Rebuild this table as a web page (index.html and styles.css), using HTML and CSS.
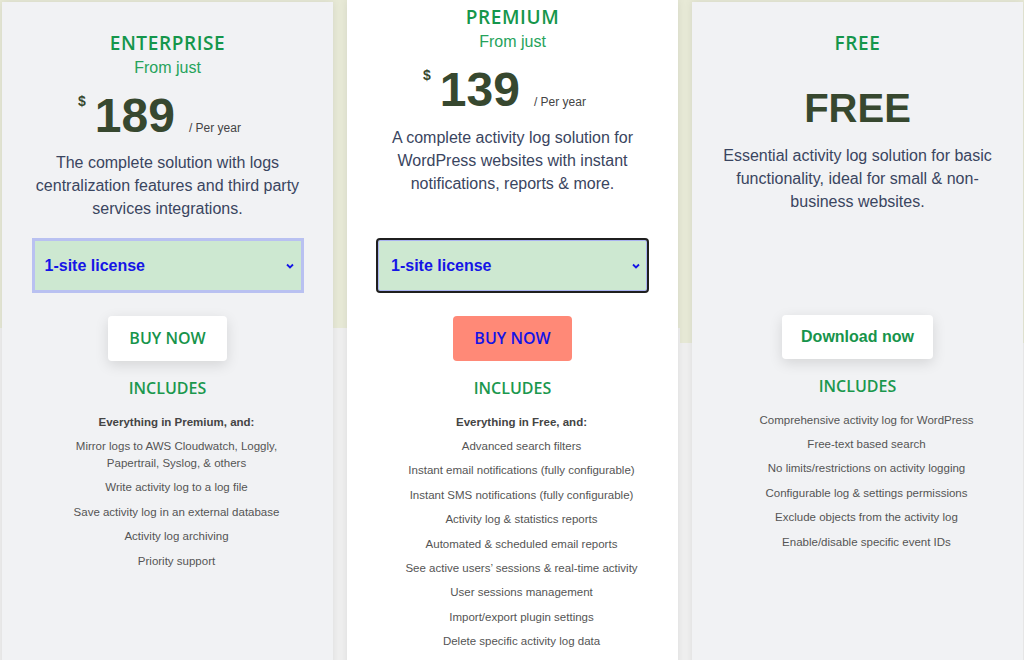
FILE: index.html
```html
<!DOCTYPE html>
<html lang="en">
<head>
<meta charset="utf-8">
<title>Pricing</title>
<link rel="stylesheet" href="styles.css">
</head>
<body>
<main class="plans">
  <section class="card card--enterprise">
    <div class="head">
      <h2 class="title">ENTERPRISE</h2>
      <p class="from">From just</p>
      <div class="price"><span class="cur">$</span><span class="amt">189</span><span class="per">/ Per year</span></div>
      <p class="desc">The complete solution with logs centralization features and third party services integrations.</p>
    </div>
    <div class="license license--soft"><span>1-site license</span><svg class="chev" width="8" height="6" viewBox="0 0 8 6"><polyline points="1,1.5 4,4.5 7,1.5" fill="none" stroke="#1515e6" stroke-width="1.8"/></svg></div>
    <a class="btn" href="#">BUY NOW</a>
    <h3 class="includes">INCLUDES</h3>
    <ul class="features">
      <li class="lead">Everything in Premium, and:</li>
      <li>Mirror logs to AWS Cloudwatch, Loggly, Papertrail, Syslog, &amp; others</li>
      <li>Write activity log to a log file</li>
      <li>Save activity log in an external database</li>
      <li>Activity log archiving</li>
      <li>Priority support</li>
    </ul>
  </section>

  <section class="card card--premium">
    <div class="head">
      <h2 class="title">PREMIUM</h2>
      <p class="from">From just</p>
      <div class="price"><span class="cur">$</span><span class="amt">139</span><span class="per">/ Per year</span></div>
      <p class="desc">A complete activity log solution for WordPress websites with instant notifications, reports &amp; more.</p>
    </div>
    <div class="license license--dark"><span>1-site license</span><svg class="chev" width="8" height="6" viewBox="0 0 8 6"><polyline points="1,1.5 4,4.5 7,1.5" fill="none" stroke="#1515e6" stroke-width="1.8"/></svg></div>
    <a class="btn btn--salmon" href="#">BUY NOW</a>
    <h3 class="includes">INCLUDES</h3>
    <ul class="features">
      <li class="lead">Everything in Free, and:</li>
      <li>Advanced search filters</li>
      <li>Instant email notifications (fully configurable)</li>
      <li>Instant SMS notifications (fully configurable)</li>
      <li>Activity log &amp; statistics reports</li>
      <li>Automated &amp; scheduled email reports</li>
      <li>See active users’ sessions &amp; real-time activity</li>
      <li>User sessions management</li>
      <li>Import/export plugin settings</li>
      <li>Delete specific activity log data</li>
    </ul>
  </section>

  <section class="card card--free">
    <div class="head">
      <h2 class="title">FREE</h2>
      <p class="big">FREE</p>
      <p class="desc">Essential activity log solution for basic functionality, ideal for small &amp; non-business websites.</p>
    </div>
    <div class="spacer"></div>
    <a class="btn btn--dl" href="#">Download now</a>
    <h3 class="includes">INCLUDES</h3>
    <ul class="features">
      <li>Comprehensive activity log for WordPress</li>
      <li>Free-text based search</li>
      <li>No limits/restrictions on activity logging</li>
      <li>Configurable log &amp; settings permissions</li>
      <li>Exclude objects from the activity log</li>
      <li>Enable/disable specific event IDs</li>
    </ul>
  </section>
</main>
</body>
</html>
```

FILE: styles.css
```css
html, body {
  margin: 0;
  padding: 0;
}

body {
  width: 1024px;
  height: 660px;
  overflow: hidden;
  font-family: "Liberation Sans", Arial, sans-serif;
  background-color: #efefef;
  background-image:
    linear-gradient(#e7e9d6, #e7e9d6),
    linear-gradient(#e7e9d6, #e7e9d6);
  background-size: 680px 328px, 344px 343px;
  background-position: 0 0, 680px 0;
  background-repeat: no-repeat;
}

.plans {
  display: grid;
  grid-template-columns: repeat(3, 331px);
  column-gap: 14px;
  padding-left: 2px;
  align-items: start;
}

.card {
  margin-top: 2px;
  height: 720px;
  background: #f1f2f4;
  box-shadow: 0 0 8px rgba(0, 0, 0, 0.08);
  display: flex;
  flex-direction: column;
  align-items: center;
  text-align: center;
}

.card--premium {
  margin-top: 0;
  background: #ffffff;
}

.head {
  box-sizing: border-box;
  width: 100%;
  height: 236px;
  padding-top: 28px;
  display: flex;
  flex-direction: column;
  align-items: center;
}

.card--premium .head {
  height: 238px;
  padding-top: 4px;
}

.title {
  margin: 0;
  font-family: "Open Sans", sans-serif;
  font-weight: 600;
  font-size: 19px;
  line-height: 26px;
  letter-spacing: 0.6px;
  color: #15964b;
}

.from {
  margin: 2px 0 0;
  font-size: 16px;
  line-height: 20px;
  color: #26a35b;
}

.price {
  margin-top: 14px;
  padding-right: 16px;
  height: 48px;
  font-size: 48px;
  line-height: 48px;
  white-space: nowrap;
}

.cur {
  vertical-align: top;
  position: relative;
  top: 2px;
  font-size: 14px;
  line-height: 14px;
  font-weight: 700;
  color: #37482f;
  margin-right: 9px;
}

.amt {
  font-weight: 700;
  color: #37482f;
}

.per {
  margin-left: 14px;
  font-size: 12px;
  line-height: 12px;
  color: #444444;
}

.desc {
  margin: 10.5px 0 0;
  max-width: 285px;
  font-size: 16px;
  line-height: 23.3px;
  color: #3a4560;
}

.card--premium .desc {
  margin-top: 11.5px;
}

.big {
  margin: 28px 0 0;
  font-size: 40px;
  line-height: 48px;
  font-weight: 700;
  color: #37482f;
}

.card--free .desc {
  margin-top: 11.6px;
}

.license {
  box-sizing: border-box;
  width: 273px;
  height: 55px;
  display: flex;
  align-items: center;
  justify-content: space-between;
  padding: 0 7px 0 10px;
  background: #cde8d1;
  color: #1515e6;
  font-weight: 700;
  font-size: 16px;
}

.license--soft {
  width: 272px;
  border: 3px solid #b9c1f1;
}

.license--dark {
  border: 2px solid #1f1f1f;
  border-radius: 4px;
  box-shadow: inset 0 0 0 1px #a9b3f0;
  padding-left: 13px;
  padding-right: 7px;
}

.chev {
  display: block;
}

.spacer {
  height: 54px;
}

.btn {
  margin-top: 23px;
  height: 45px;
  line-height: 45px;
  padding: 0 21.5px;
  border-radius: 4px;
  background: #ffffff;
  box-shadow: 0 4px 14px rgba(0, 0, 0, 0.12);
  font-family: "Open Sans", sans-serif;
  font-weight: 600;
  font-size: 16px;
  color: #17944b;
  text-decoration: none;
}

.btn--salmon {
  background: #ff8977;
  color: #1414e6;
  box-shadow: none;
}

.btn--dl {
  height: 44px;
  line-height: 44px;
  padding: 0 19.5px;
  font-family: "Liberation Sans", Arial, sans-serif;
  font-weight: 700;
}

.includes {
  margin: 16px 0 0;
  font-family: "Open Sans", sans-serif;
  font-weight: 600;
  font-size: 16px;
  line-height: 22px;
  color: #1b984e;
}

.features {
  list-style: none;
  margin: 11px 0 0;
  padding: 0 0 0 18px;
  max-width: 250px;
  font-size: 11.5px;
  line-height: 17px;
  color: #555555;
}

.features li {
  padding: 3.7px 0;
}

.features .lead {
  font-weight: 700;
  color: #444444;
}
```
